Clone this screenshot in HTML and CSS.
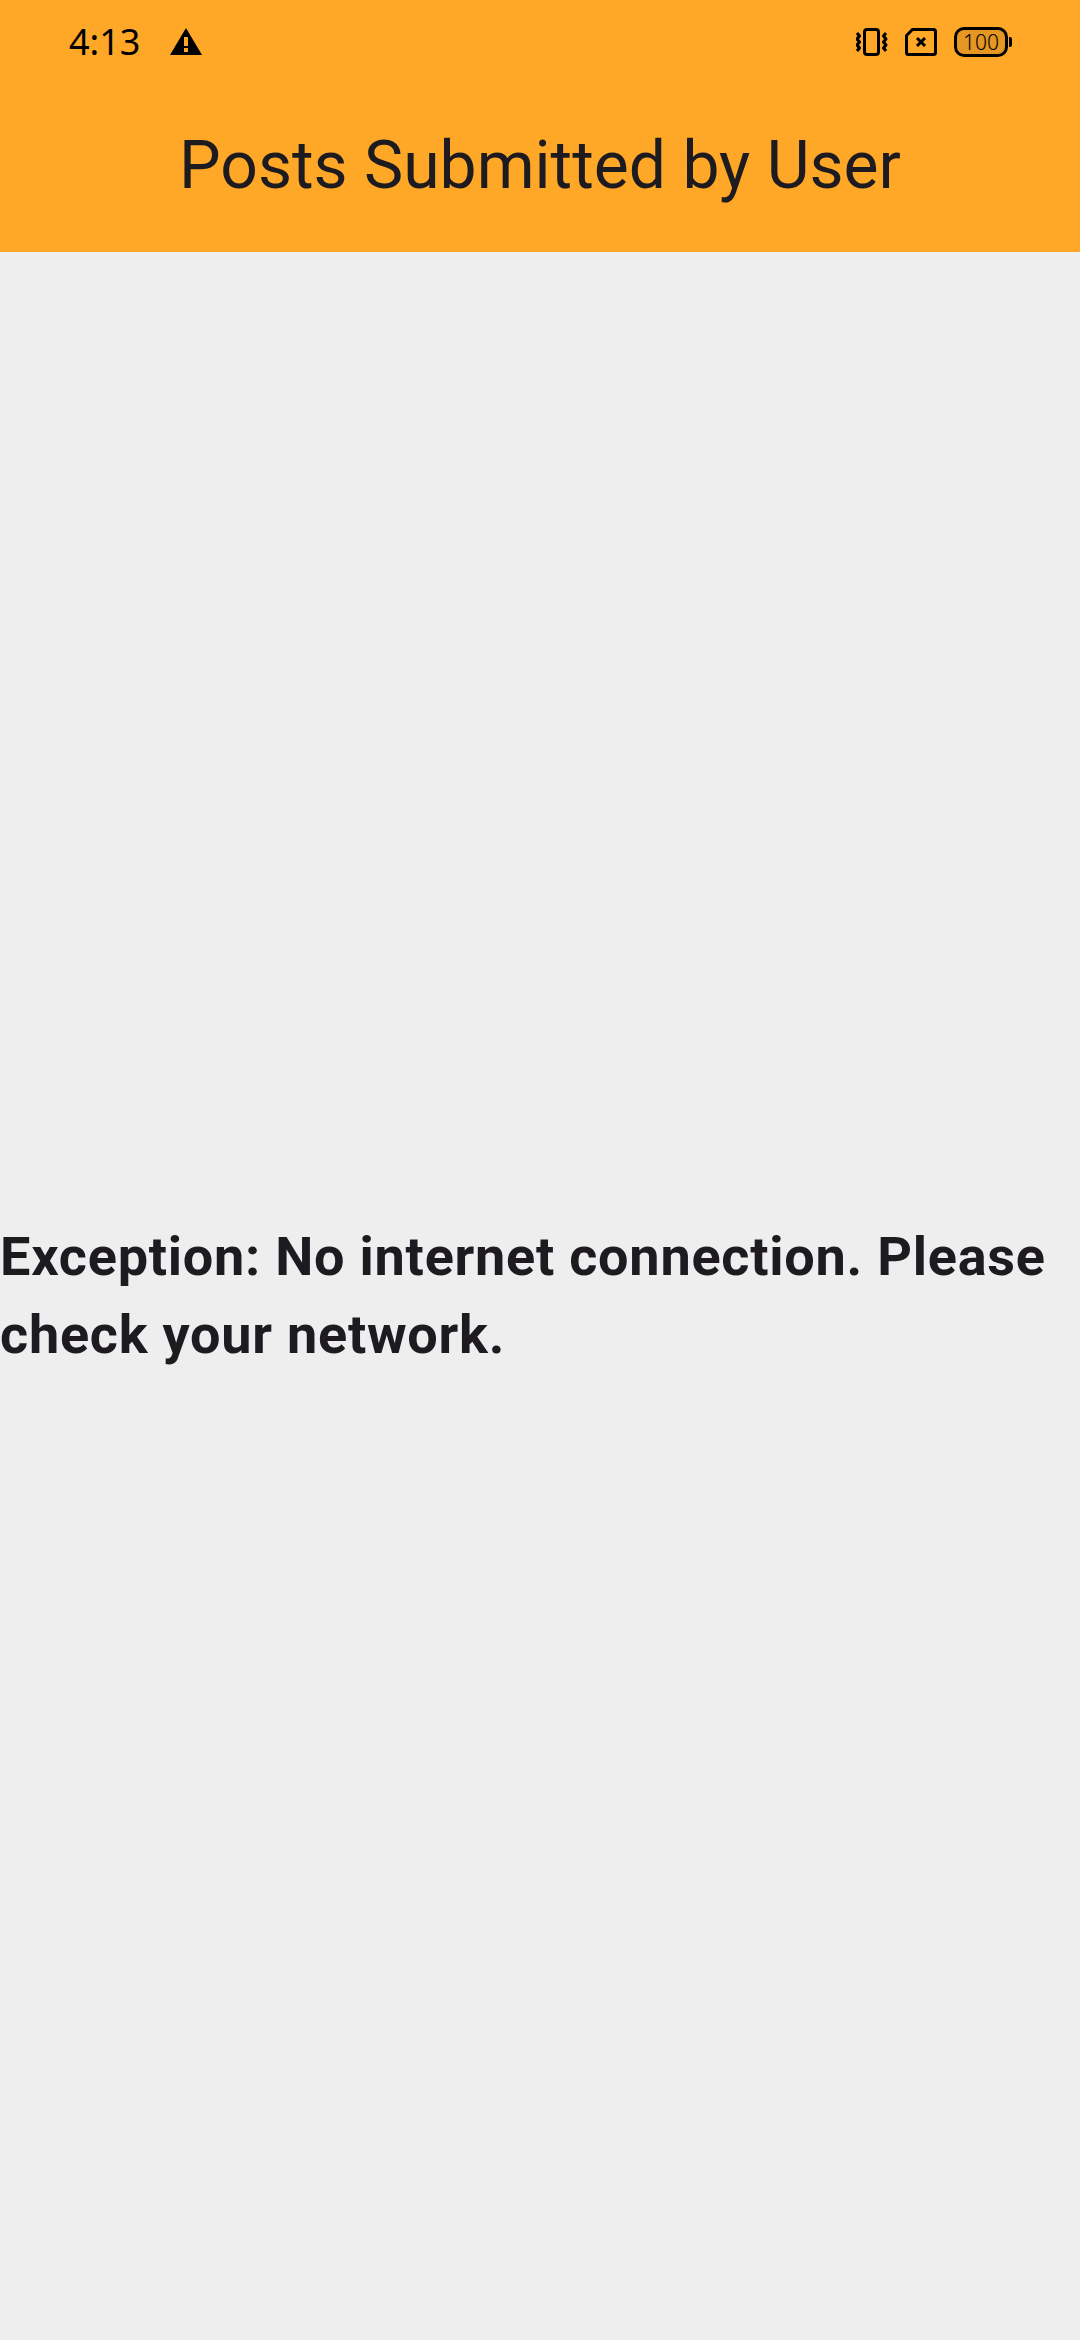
FILE: index.html
```html
<!DOCTYPE html>
<html lang="en">
<head>
<meta charset="utf-8">
<meta name="viewport" content="width=device-width, initial-scale=1">
<title>Posts Submitted by User</title>
<link rel="stylesheet" href="styles.css">
</head>
<body>
<header class="top">
  <div class="status">
    <div class="status-group status-left">
      <span class="clock">4:13</span>
      <svg width="32" height="28" viewBox="0 0 32 28" aria-hidden="true"><path d="M16 0 32 27H0Z"/><path class="cut" d="M14 9h4v9h-4zM14 20h4v4h-4z"/></svg>
    </div>
    <div class="status-group">
      <svg width="32" height="28" viewBox="0 0 32 28" aria-hidden="true"><rect class="line" x="8.500" y="1.500" width="14" height="25" rx="2.500"/><path class="line wave" d="M1 5l2.500 3L1 11l2.500 3L1 17l2.500 3L1 23M30 5l-2.500 3 2.500 3-2.500 3 2.500 3-2.500 3 2.500 3"/></svg>
      <svg width="32" height="28" viewBox="0 0 32 28" aria-hidden="true"><path class="line" d="M7.500 1.500H28.500a2 2 0 0 1 2 2V24.500a2 2 0 0 1-2 2H3.500a2 2 0 0 1-2-2V7.500Z"/><path class="line" d="M12 10l8 8M20 10l-8 8"/></svg>
      <div class="battery"><span class="battery-level">100</span><span class="battery-tip"></span></div>
    </div>
  </div>
  <h1 class="title">Posts Submitted by User</h1>
</header>
<main class="content">
  <p class="message">Exception: No internet connection. Please check your network.</p>
</main>
</body>
</html>
```

FILE: styles.css
```css
* { box-sizing: border-box; }
body { margin: 0; min-height: 100vh; display: flex; flex-direction: column; background: #eeeeee; color: #1d1b20; font-family: Roboto, sans-serif; }
.top { background: #ffa726; }
.status { display: flex; justify-content: space-between; align-items: center; height: 84px; padding: 0 68px 0 69px; color: #000; font-family: "Noto Sans", sans-serif; }
.status-group { display: flex; align-items: center; gap: 17px; }
.status-left { gap: 30px; }
.clock { font-size: 36px; line-height: 40px; }
.line { fill: none; stroke: #000; stroke-width: 3; }
.wave { stroke-linejoin: round; }
.cut { fill: #ffa726; }
.battery { display: flex; align-items: center; gap: 1px; }
.battery-level { width: 54px; height: 30px; border: 3px solid #000; border-radius: 10px; background: #e69622; font-size: 21px; font-weight: 300; line-height: 24px; text-align: center; }
.battery-tip { width: 3px; height: 10px; border-radius: 0 2px 2px 0; background: #000; }
.title { margin: 0; height: 168px; line-height: 164px; text-align: center; font-size: 66px; font-weight: 400; }
.content { flex: 1; display: flex; align-items: center; }
.message { margin: 0; font-size: 54px; line-height: 78px; font-weight: 700; letter-spacing: 0.014em; }
```
